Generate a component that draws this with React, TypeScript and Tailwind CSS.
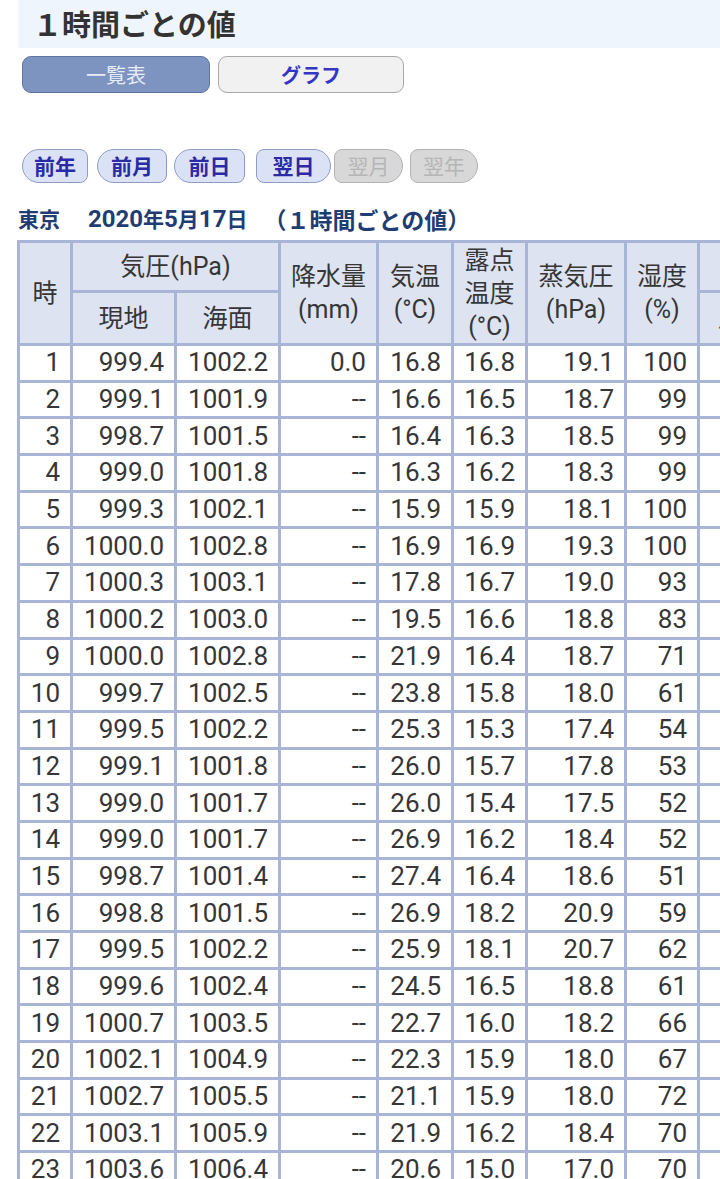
import React from 'react';

const rows: string[][] = [
  ['1', '999.4', '1002.2', '0.0', '16.8', '16.8', '19.1', '100', '2.1', '北北東'],
  ['2', '999.1', '1001.9', '--', '16.6', '16.5', '18.7', '99', '1.8', '北'],
  ['3', '998.7', '1001.5', '--', '16.4', '16.3', '18.5', '99', '1.5', '北'],
  ['4', '999.0', '1001.8', '--', '16.3', '16.2', '18.3', '99', '1.6', '北北西'],
  ['5', '999.3', '1002.1', '--', '15.9', '15.9', '18.1', '100', '1.2', '北'],
  ['6', '1000.0', '1002.8', '--', '16.9', '16.9', '19.3', '100', '1.4', '北東'],
  ['7', '1000.3', '1003.1', '--', '17.8', '16.7', '19.0', '93', '1.9', '東北東'],
  ['8', '1000.2', '1003.0', '--', '19.5', '16.6', '18.8', '83', '2.3', '東'],
  ['9', '1000.0', '1002.8', '--', '21.9', '16.4', '18.7', '71', '2.6', '南東'],
  ['10', '999.7', '1002.5', '--', '23.8', '15.8', '18.0', '61', '3.0', '南南東'],
  ['11', '999.5', '1002.2', '--', '25.3', '15.3', '17.4', '54', '3.4', '南'],
  ['12', '999.1', '1001.8', '--', '26.0', '15.7', '17.8', '53', '3.8', '南'],
  ['13', '999.0', '1001.7', '--', '26.0', '15.4', '17.5', '52', '4.1', '南'],
  ['14', '999.0', '1001.7', '--', '26.9', '16.2', '18.4', '52', '4.4', '南南東'],
  ['15', '998.7', '1001.4', '--', '27.4', '16.4', '18.6', '51', '4.6', '南'],
  ['16', '998.8', '1001.5', '--', '26.9', '18.2', '20.9', '59', '4.9', '南'],
  ['17', '999.5', '1002.2', '--', '25.9', '18.1', '20.7', '62', '4.2', '南'],
  ['18', '999.6', '1002.4', '--', '24.5', '16.5', '18.8', '61', '3.7', '南南西'],
  ['19', '1000.7', '1003.5', '--', '22.7', '16.0', '18.2', '66', '3.1', '南'],
  ['20', '1002.1', '1004.9', '--', '22.3', '15.9', '18.0', '67', '2.8', '南'],
  ['21', '1002.7', '1005.5', '--', '21.1', '15.9', '18.0', '72', '2.5', '北'],
  ['22', '1003.1', '1005.9', '--', '21.9', '16.2', '18.4', '70', '2.2', '北北東'],
  ['23', '1003.6', '1006.4', '--', '20.6', '15.0', '17.0', '70', '2.0', '北'],
  ['24', '1004.0', '1006.8', '--', '19.9', '14.8', '16.8', '73', '1.7', '北'],
];

// widths and left gaps measured from the reference
const navButtons = [
  { label: '前年', cls: 'w-[66px]', side: 'prev', on: true },
  { label: '前月', cls: 'w-[70px] ml-[9px]', side: 'prev', on: true },
  { label: '前日', cls: 'w-[71px] ml-[7px]', side: 'prev', on: true },
  { label: '翌日', cls: 'w-[75px] ml-[11px]', side: 'next', on: true },
  { label: '翌月', cls: 'w-[69px] ml-[3px]', side: 'next', on: false },
  { label: '翌年', cls: 'w-[68px] ml-[7px]', side: 'next', on: false },
];

const head = 'bg-[#dde3f1] flex flex-col items-center justify-center text-center text-[25px] leading-[33px]';
const cell = 'bg-white flex items-center justify-end pr-[10px]';
const num = "text-[24px] font-['Roboto',sans-serif]";

export default function App() {
  return (
    <div className="w-full overflow-hidden bg-white text-[#363636] font-['Roboto','Noto_Sans_CJK_JP',sans-serif]">
      {/* Title */}
      <div className="ml-[18px] h-[48px] bg-[#eef5fc] flex items-center pl-[15px]">
        <h1 className="text-[29px] font-bold text-[#333] font-['Noto_Sans_CJK_JP',sans-serif]">１時間ごとの値</h1>
      </div>

      {/* Tabs */}
      <div className="flex gap-[8px] ml-[22px] mt-[8px]">
        <div className="w-[188px] h-[37px] rounded-[9px] border border-[#5f749f] bg-[#7d94c1] flex items-center justify-center text-[20px] text-[#e8edf6] font-['Noto_Sans_CJK_JP',sans-serif]">
          一覧表
        </div>
        <div className="w-[186px] h-[37px] rounded-[9px] border border-[#a8a8a8] bg-[#f1f1f1] flex items-center justify-center text-[20px] font-bold text-[#3535c8] font-['Noto_Sans_CJK_JP',sans-serif]">
          グラフ
        </div>
      </div>

      {/* Day navigation */}
      <div className="flex ml-[22px] mt-[56px] font-['Noto_Sans_CJK_JP',sans-serif]">
        {navButtons.map((b) => (
          <div
            key={b.label}
            className={`${b.cls} h-[34px] border flex items-center justify-center text-[21px] ${
              b.side === 'prev' ? 'rounded-l-[17px] rounded-r-[8px]' : 'rounded-r-[17px] rounded-l-[8px]'
            } ${
              b.on
                ? 'bg-[#dce2f5] border-[#8f9cc6] text-[#2a2aa6] font-bold'
                : 'bg-[#d8d8d8] border-[#b3b3b3] text-[#b5b5b5]'
            }`}
          >
            {b.label}
          </div>
        ))}
      </div>

      {/* Caption */}
      <div className="ml-[18px] mt-[23px] h-[26px] flex items-center text-[21px] font-bold text-[#1f3d73] font-['Noto_Sans_CJK_JP',sans-serif] whitespace-pre">
        <span>東京　</span>
        <span className="ml-[7px]">
          <span className={num}>2020</span>年<span className={num}>5</span>月<span className={num}>17</span>日
        </span>
        <span className="ml-[16px] text-[23px]">（１時間ごとの値）</span>
      </div>

      {/* Table */}
      <div className="ml-[17px] mt-[8px] w-max grid gap-[3px] p-[3px] bg-[#a9b5d6] text-[26px] grid-cols-[50px_101px_101px_95px_72px_71px_96px_70px_86px_86px_90px] grid-rows-[47px_50px_repeat(24,33.7px)]">
        <div className={`${head} row-span-2`}>時</div>
        <div className={`${head} col-span-2`}>気圧(hPa)</div>
        <div className={`${head} row-span-2`}>
          <span>降水量</span>
          <span>(mm)</span>
        </div>
        <div className={`${head} row-span-2`}>
          <span>気温</span>
          <span>(°C)</span>
        </div>
        <div className={`${head} row-span-2`}>
          <span>露点</span>
          <span>温度</span>
          <span>(°C)</span>
        </div>
        <div className={`${head} row-span-2`}>
          <span>蒸気圧</span>
          <span>(hPa)</span>
        </div>
        <div className={`${head} row-span-2`}>
          <span>湿度</span>
          <span>(%)</span>
        </div>
        <div className={`${head} col-span-2`}>風向・風速(m/s)</div>
        <div className={`${head} row-span-2`}>
          <span>日照</span>
          <span>時間</span>
          <span>(h)</span>
        </div>
        <div className={head}>現地</div>
        <div className={head}>海面</div>
        <div className={head}>風速</div>
        <div className={head}>風向</div>

        {rows.map((r) => (
          <React.Fragment key={r[0]}>
            {r.map((v, i) => (
              <div key={i} className={i === 9 ? 'bg-white flex items-center justify-center' : cell}>
                {v}
              </div>
            ))}
            <div className={cell}>0.0</div>
          </React.Fragment>
        ))}
      </div>
    </div>
  );
}
